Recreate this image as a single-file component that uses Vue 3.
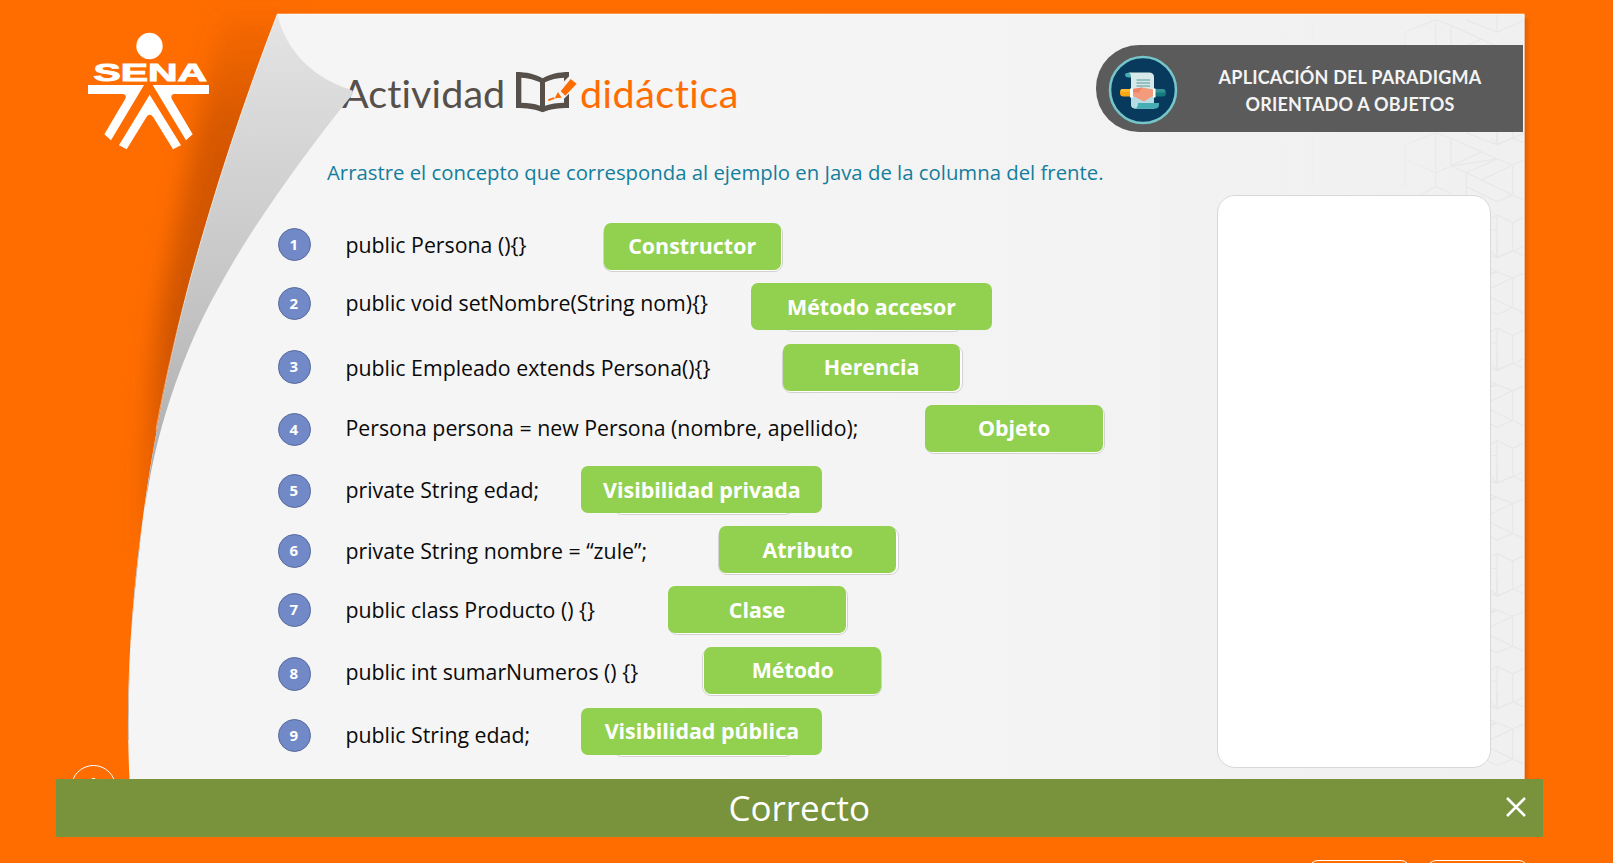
<script setup>
const rows = [
  { n: 1, code: 'public Persona (){}', concept: 'Constructor', h: 60, x: 603.6, w: 177.2, bullet: 4.6, text: 7.5, slot: -0.7, label: 45.5 },
  { n: 2, code: 'public void setNombre(String nom){}', concept: 'Método accesor', h: 60.5, x: 751, w: 241, bullet: 3.6, text: 5.5, slot: 32, label: 47 },
  { n: 3, code: 'public Empleado extends Persona(){}', concept: 'Herencia', h: 61.3, x: 783, w: 177.2, bullet: 6.8, text: 10.1, slot: -0.7, label: 46.5 },
  { n: 4, code: 'Persona persona = new Persona (nombre, apellido);', concept: 'Objeto', h: 61.2, x: 925.4, w: 177.4, bullet: 8.2, text: 8.8, slot: -0.7, label: 46 },
  { n: 5, code: 'private String edad;', concept: 'Visibilidad privada', h: 60, x: 581.4, w: 241, bullet: 8.3, text: 9.8, slot: 32, label: 47 },
  { n: 6, code: 'private String nombre = “zule”;', concept: 'Atributo', h: 60.3, x: 719, w: 177.5, bullet: 8.3, text: 11, slot: -0.7, label: 47 },
  { n: 7, code: 'public class Producto () {}', concept: 'Clase', h: 60.4, x: 668.3, w: 177.5, bullet: 7.1, text: 9.6, slot: -0.7, label: 47 },
  { n: 8, code: 'public int sumarNumeros () {}', concept: 'Método', h: 61.3, x: 704, w: 177.5, bullet: 10.6, text: 11.1, slot: -2, label: 45.5 },
  { n: 9, code: 'public String edad;', concept: 'Visibilidad pública', h: 60, x: 581.4, w: 241, bullet: 10.8, text: 12.8, slot: 32, label: 45.5 },
]
const TEXT_LEFT = 346
const tiles = [-1, 0, 1, 2, 3, 4, 5]
</script>

<template>
  <main class="stage">
    <svg class="backdrop" viewBox="0 0 1613 863" aria-hidden="true">
      <defs>
        <linearGradient id="paper" x1="0" x2="1" y1="0" y2="0">
          <stop offset="0.4" stop-color="#f5f5f5" />
          <stop offset="1" stop-color="#f0f0f0" />
        </linearGradient>
        <linearGradient id="fade" gradientUnits="userSpaceOnUse" x1="1250" x2="1500" y1="0" y2="0">
          <stop offset="0" stop-color="#fff" stop-opacity="0.05" />
          <stop offset="0.5" stop-color="#fff" stop-opacity="0.3" />
          <stop offset="0.85" stop-color="#fff" stop-opacity="1" />
        </linearGradient>
        <linearGradient id="edge" x1="0" x2="1" y1="0" y2="0">
          <stop offset="0" stop-color="#cc5500" stop-opacity="0.85" />
          <stop offset="1" stop-color="#ff6d00" stop-opacity="0" />
        </linearGradient>
        <linearGradient id="shade" gradientUnits="userSpaceOnUse" x1="0" y1="10" x2="0" y2="560">
          <stop offset="0" stop-color="#c04c00" stop-opacity="0.1" />
          <stop offset="0.22" stop-color="#c04c00" stop-opacity="0.65" />
          <stop offset="0.6" stop-color="#c04c00" stop-opacity="0.8" />
          <stop offset="1" stop-color="#c04c00" stop-opacity="0.2" />
        </linearGradient>
        <mask id="fadeMask"><rect width="1613" height="863" fill="url(#fade)" /></mask>
        <clipPath id="paperClip"><rect x="1200" y="14" width="324" height="765" /></clipPath>
        <filter id="soft" x="-50%" y="-20%" width="200%" height="140%"><feGaussianBlur stdDeviation="12" /></filter>
        <g id="lattice" transform="scale(0.33333)" fill="none" stroke="#e7e7e7" stroke-width="3.4">
          <path d="M767 398V560M813 415V498M951 383V435M998 495V585M859 518V585M951 645V772M998 668V752M675 435V560M305 435V580M398 398V560" />
          <path d="M675 435L767 398M767 398L813 415L951 477L813 498M859 398L951 435L1035 398M813 498L905 455M905 540L998 495M859 518L951 477L998 495L1035 480M859 518L998 585L1035 602M675 477L767 518L813 498L859 518M720 585L767 560L813 580M859 560L951 605L998 585M935 655L951 645L998 668L1035 650M935 755L951 772L998 752L1035 768M935 690H951" />
        </g>
      </defs>
      <path d="M222 12C200 105 182 200 164 290C152 370 145 440 141 540L190 540L210 330L300 12Z" fill="url(#shade)" filter="url(#soft)" />
      <rect x="1524" y="18" width="8" height="761" fill="url(#edge)" />
      <path d="M277.3 14C243 103 213 195 190 280C161 390 128 560 128 720Q128.3 756 129.5 779H1524.5V14Z" fill="url(#paper)" />
      <g clip-path="url(#paperClip)" mask="url(#fadeMask)">
        <use v-for="t in tiles" :key="t" href="#lattice" x="1180" :y="t * 112.8" />
      </g>
      <path d="M277 14H1524V779" fill="none" stroke="#ffffff" stroke-opacity="0.55" />
    </svg>

    <header class="header">
      <h1 class="title">
        <span class="title-dark">Actividad</span>
        <svg class="book" viewBox="552 60 195 132" aria-hidden="true">
          <path fill="#57504a" fill-rule="evenodd" d="M558 66C590 66 615 72 638 85C660 72 685 66 717 66V174C685 174 660 177 638 187C615 177 590 174 558 174ZM574 83V158C595 158 612 160 630 167V97C615 90 595 84 574 83ZM702 83C682 84 662 88 645 97V167C662 161 682 158 702 158Z" />
          <path fill="#f4f4f4" d="M722 74L750 98L702 146L666 153L676 120Z" />
          <path fill="#ff6d00" d="M722 87L740 101L706 137L692 124ZM684 126L695 143L674 145ZM654 148L671 142L674 146L656 154Z" />
        </svg>
        <span class="title-accent">didáctica</span>
      </h1>
      <div class="course">
        <svg class="badge" viewBox="0 0 70 70" aria-hidden="true">
          <circle cx="35" cy="35" r="33" fill="#073a5c" stroke="#76c5c8" stroke-width="2.6" />
          <path fill="#46aeb3" d="M19 18H42V22.500H21Q17 22.500 17 19.500Q17 18 19 18Z" />
          <path fill="#d6e9e8" d="M20 17.500H41Q46 17.500 46 22V53.500H27Q23 53 23 49V22Q23 18 20 17.500Z" />
          <path fill="#b5dbe5" d="M23 38H46V53.500H27Q23 53 23 49Z" />
          <path fill="#46aeb3" d="M30 48H51V50Q51 53.700 46 53.700H27Q30 53 30 48Z" />
          <path stroke="#7fb3b5" stroke-width="1.700" d="M28.500 25H42M28.500 28H42M28.500 31H42" />
          <rect x="12" y="34" width="13" height="7.500" rx="3.500" fill="#ffa713" />
          <rect x="12.500" y="34" width="10" height="3" rx="1.500" fill="#ffbd2e" />
          <rect x="45" y="34" width="13" height="7.500" rx="3.500" fill="#147a7e" />
          <rect x="46" y="34" width="11" height="3.500" rx="1.700" fill="#359397" />
          <path fill="#fff" d="M22 33.500H25V42.500H22ZM45 33.500H47.500V42.500H45Z" />
          <path fill="#f49b7b" d="M25 34L34 32.500L45 34.500V41L36 46.500L25 41Z" />
          <path fill="#ee8467" d="M25 34L34 32.500L31 38L25 37Z" />
        </svg>
        <div class="course-name">APLICACIÓN DEL PARADIGMA<br>ORIENTADO A OBJETOS</div>
      </div>
    </header>

    <section class="body">
      <div class="activity">
        <p class="instruction">Arrastre el concepto que corresponda al ejemplo en Java de la columna del frente.</p>
        <div v-for="r in rows" :key="r.n" class="row" :style="{ height: r.h + 'px' }">
          <span class="bullet" :style="{ marginTop: r.bullet + 'px' }">{{ r.n }}</span>
          <span class="code" :style="{ marginTop: r.text + 'px', width: r.x - TEXT_LEFT + 'px' }">{{ r.code }}</span>
          <span class="drop" :style="{ width: r.w + 'px' }">
            <span class="slot" :style="{ left: r.slot + 'px' }"></span>
            <span class="chip" :style="{ lineHeight: r.label + 'px' }">{{ r.concept }}</span>
          </span>
        </div>
      </div>
      <div class="panel"></div>
    </section>

    <svg class="fold" viewBox="0 0 420 863" aria-hidden="true">
      <defs>
        <linearGradient id="curl" gradientUnits="userSpaceOnUse" x1="0" y1="14" x2="0" y2="560">
          <stop offset="0" stop-color="#e4e4e4" />
          <stop offset="0.5" stop-color="#c6c6c6" />
          <stop offset="1" stop-color="#a2a2a2" />
        </linearGradient>
      </defs>
      <path fill="url(#curl)" d="M277.300 14C286 52 314 78 350 89.500Q355 91 352 95C303 155 251 229 223 280C192 333 163 405 149 483C137 548 128.500 630 128.500 740L127.700 740C128 560 161 390 190 280C213 195 243 103 277.300 14Z" />
      <path fill="none" stroke="#ffffff" stroke-opacity="0.45" d="M277.300 14C243 103 213 195 190 280C178 325 166 375 156 430" />
      <g fill="#fff">
        <circle cx="149.500" cy="46" r="13.200" />
        <g transform="scale(0.33333)">
          <path d="M264 255H432L333 421L313 403L376 296Q382 284 368 282H264Z" />
          <path d="M458 255H627V282H522Q511 284 515 296L578 403L558 421Z" />
          <path d="M449 284L543 436L519 448L459 350Q449 339 440 350L380 448L357 436Z" />
        </g>
        <text x="93.500" y="81" font-family="'Liberation Sans', Arial, sans-serif" font-weight="700" font-size="23.500" textLength="113.500" lengthAdjust="spacingAndGlyphs" stroke="#fff" stroke-width="0.900">SENA</text>
      </g>
    </svg>

    <div class="menu-button"><span>i</span></div>
    <div class="banner"><span>Correcto</span>
      <svg class="close" viewBox="0 0 20 20" aria-hidden="true"><path d="M1 1L19 19M19 1L1 19" stroke="#fff" stroke-width="2.500" fill="none" /></svg>
    </div>
    <nav class="pager"><span></span><span></span></nav>
  </main>
</template>

<style scoped>
.stage {
  position: relative;
  width: 1613px;
  height: 863px;
  overflow: hidden;
  background: #ff6d00;
  font-family: "Open Sans", "Noto Sans", sans-serif;
}
.backdrop { position: absolute; inset: 0; width: 1613px; height: 863px; }
.fold { position: absolute; left: 0; top: 0; width: 420px; height: 863px; }
.header {
  position: relative;
  display: flex;
  justify-content: space-between;
  align-items: flex-start;
  height: 158px;
  padding: 0 90px 0 342px;
  box-sizing: border-box;
}
.title {
  display: flex;
  margin: 69px 0 0;
  font: 400 39.500px/48px Lato, sans-serif;
  font-variant-ligatures: none;
}
.title-dark { width: 172px; color: #57504a; letter-spacing: 0.100px; }
.book { width: 65px; height: 44px; margin-top: 1px; }
.title-accent { padding-left: 1px; color: #ff6d00; letter-spacing: 0.500px; }
.course {
  display: flex;
  align-items: center;
  box-sizing: border-box;
  width: 427.500px;
  height: 86.500px;
  margin-top: 45.300px;
  padding-left: 12px;
  border-radius: 43px 0 0 43px;
  background: #5b5b5b;
}
.badge { flex: none; width: 70px; height: 70px; margin-top: 2px; }
.course-name {
  display: flex;
  justify-content: center;
  box-sizing: border-box;
  width: 345px;
  margin-top: 4px;
  padding: 0 58px;
  color: #f4f4f4;
  font: 700 18px/26.700px Lato, sans-serif;
  letter-spacing: 0.200px;
  text-align: center;
  white-space: nowrap;
}
.body { position: relative; display: flex; height: 621px; }
.activity { width: 1217px; }
.instruction {
  height: 65px;
  margin: 0;
  padding-left: 327px;
  box-sizing: border-box;
  color: #137e9d;
  font-size: 20.330px;
  line-height: 28px;
}
.row { display: flex; align-items: flex-start; padding-left: 278px; }
.bullet {
  box-sizing: border-box;
  width: 33.400px;
  height: 33.400px;
  margin-right: 34.100px;
  padding-right: 2px;
  border: 1.500px solid #586a9c;
  border-radius: 50%;
  background: #7289c7;
  color: #fff;
  font-size: 15px;
  font-weight: 700;
  line-height: 30px;
  text-align: center;
}
.code { color: #0a0a0a; font-size: 21.300px; line-height: 28px; white-space: nowrap; }
.drop { position: relative; height: 47px; margin-left: 0.500px; }
.slot {
  position: absolute;
  top: 1px;
  box-sizing: border-box;
  width: 180.500px;
  height: 48px;
  border: 1px solid #d2d2d2;
  border-radius: 9px;
  background: #fff;
}
.chip {
  position: relative;
  display: block;
  height: 47px;
  border-radius: 7px;
  background: #92d14f;
  color: #fff;
  font-size: 21.400px;
  font-weight: 700;
  text-align: center;
  white-space: nowrap;
}
.panel {
  box-sizing: border-box;
  width: 274px;
  height: 573px;
  margin-top: 37px;
  border: 1.500px solid #d8d8d8;
  border-radius: 18px;
  background: #fff;
}
.menu-button {
  position: absolute;
  left: 71px;
  top: 764.500px;
  box-sizing: border-box;
  width: 45px;
  height: 45px;
  border: 1.500px solid #fff;
  border-radius: 50%;
  color: #fff;
  font-size: 22px;
  font-weight: 700;
  line-height: 38px;
  text-align: center;
}
.banner {
  position: relative;
  display: flex;
  justify-content: center;
  align-items: center;
  width: 1486.500px;
  height: 58px;
  margin-left: 56px;
  background: #78933b;
  color: #fff;
  font-size: 35px;
}
.banner span { line-height: 58px; }
.close { position: absolute; right: 17px; top: 18px; width: 20px; height: 20px; }
.pager {
  position: relative;
  display: flex;
  gap: 17px;
  margin: 23px 0 0 1309px;
}
.pager span {
  box-sizing: border-box;
  width: 101px;
  height: 36px;
  border: 1.500px solid #fff;
  border-radius: 9px;
}
</style>
